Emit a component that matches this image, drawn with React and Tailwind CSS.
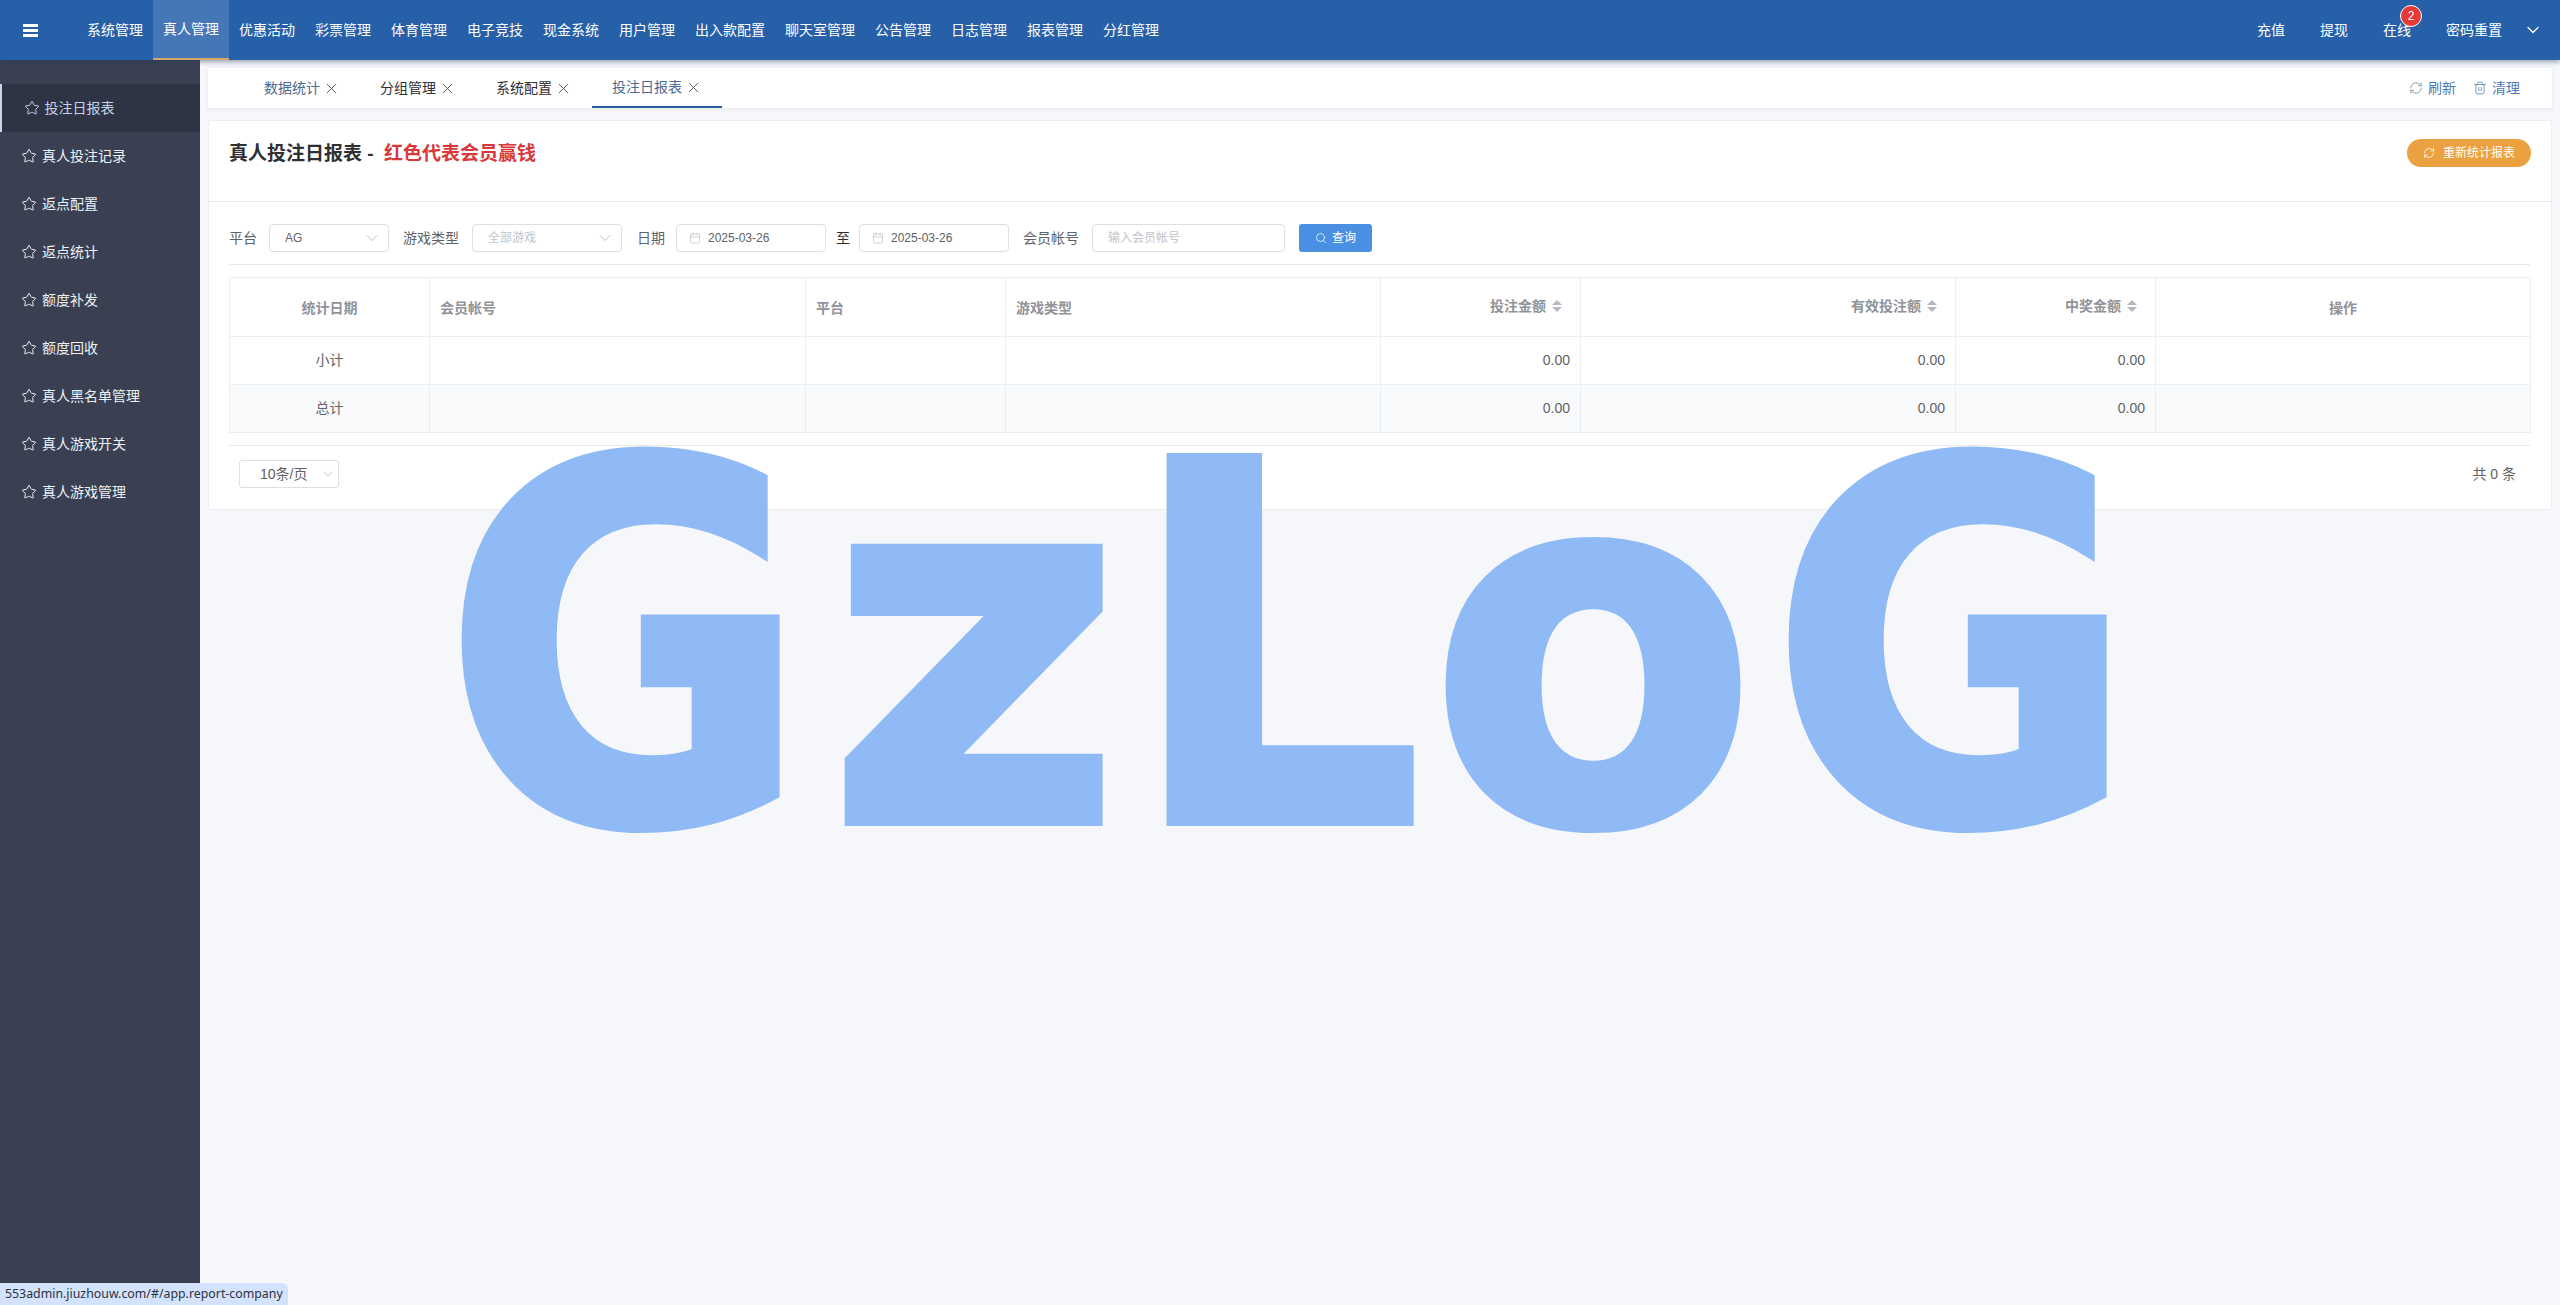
import React from 'react'
import { Star, X, RefreshCw, Trash2, Search, Calendar, ChevronDown } from 'lucide-react'

const NAV_ITEMS = ['系统管理', '真人管理', '优惠活动', '彩票管理', '体育管理', '电子竞技', '现金系统', '用户管理', '出入款配置', '聊天室管理', '公告管理', '日志管理', '报表管理', '分红管理']
const SIDE_ITEMS = ['投注日报表', '真人投注记录', '返点配置', '返点统计', '额度补发', '额度回收', '真人黑名单管理', '真人游戏开关', '真人游戏管理']
const TABS = ['数据统计', '分组管理', '系统配置', '投注日报表']

function Caret() {
  return (
    <svg width="10" height="14" viewBox="0 0 10 14" className="shrink-0 text-[#b4b8c0]">
      <path d="M5 1 10 6H0z" fill="currentColor" />
      <path d="M5 13 0 8h10z" fill="currentColor" />
    </svg>
  )
}

function Header() {
  return (
    <header className="relative z-10 h-[60px] shrink-0 flex items-center bg-[#2560a8] text-white text-sm shadow-[0_2px_5px_rgba(40,60,90,0.45)]">
      <div className="w-[77px] pl-[23px] shrink-0">
        <div className="flex flex-col gap-[2px] w-[15px]">
          <span className="h-[3px] bg-white" />
          <span className="h-[3px] bg-white" />
          <span className="h-[3px] bg-white" />
        </div>
      </div>
      <nav className="flex h-full">
        {NAV_ITEMS.map((item) => (
          <div
            key={item}
            className={item === '真人管理'
              ? 'h-full px-2.5 flex items-center bg-[#4577b6] border-b-2 border-[#d8a868]'
              : 'h-full px-2.5 flex items-center'}
          >
            {item}
          </div>
        ))}
      </nav>
      <div className="ml-auto flex items-center pr-[17px]">
        <span>充值</span>
        <span className="ml-[35px]">提现</span>
        <span className="ml-[35px] relative">
          在线
          <span className="absolute -top-[15px] -right-[11px] w-[22px] h-[22px] rounded-full bg-[#e53935] border border-white text-xs flex items-center justify-center">2</span>
        </span>
        <span className="ml-[35px]">密码重置</span>
        <ChevronDown size={20} strokeWidth={1.5} className="ml-[21px]" />
      </div>
    </header>
  )
}

function Sidebar() {
  return (
    <aside className="w-[200px] shrink-0 bg-[#3a4052] pt-6 text-sm text-[#eef0f4]">
      {SIDE_ITEMS.map((item, i) => (
        <div
          key={item}
          className={i === 0
            ? 'h-12 flex items-center gap-[5px] pl-[21.5px] bg-[#2f3444] border-l-2 border-[#c9d6ea] text-[#c3d3ea]'
            : 'h-12 flex items-center gap-[5px] pl-[21px]'}
        >
          <Star size={16} strokeWidth={1.5} className="shrink-0" />
          {item}
        </div>
      ))}
    </aside>
  )
}

function TabsBar() {
  return (
    <div className="h-10 bg-white flex items-stretch pl-9 pr-8 text-sm shadow-[0_1px_4px_rgba(0,21,41,0.08)]">
      {TABS.map((tab, i) => (
        <div
          key={tab}
          className={[
            'px-5 flex items-center',
            i === 3 ? 'border-b-2 border-[#2a5f9e] text-[#4a6a92]' : '',
            i === 0 ? 'text-[#4a6a92]' : '',
            i === 1 || i === 2 ? 'text-[#2d2f33]' : '',
          ].join(' ')}
        >
          {tab}
          <X size={17} strokeWidth={1.2} className="ml-[3px] text-[#444]" />
        </div>
      ))}
      <div className="ml-auto flex items-center text-[#4f7bb5]">
        <RefreshCw size={14} strokeWidth={1.3} className="text-[#7b8794]" />
        <span className="ml-[5px]">刷新</span>
        <Trash2 size={14} strokeWidth={1.3} className="ml-[17px]" />
        <span className="ml-[5px]">清理</span>
      </div>
    </div>
  )
}

function SelectBox({ className, text, muted }) {
  return (
    <div className={`h-7 flex items-center justify-between pl-[15px] pr-1.5 rounded border border-[#dcdfe6] bg-white text-xs ${muted ? 'text-[#c0c4cc]' : 'text-[#606266]'} ${className}`}>
      {text}
      <ChevronDown size={20} strokeWidth={0.9} className="text-[#a8abb2]" />
    </div>
  )
}

function DateBox({ className }) {
  return (
    <div className={`h-7 flex items-center pl-3 rounded border border-[#dcdfe6] bg-white text-xs text-[#606266] ${className}`}>
      <Calendar size={12} strokeWidth={1} className="text-[#a8abb2] mr-[7px]" />
      2025-03-26
    </div>
  )
}

function FilterRow() {
  return (
    <div className="flex items-center h-7 text-sm text-[#606266]">
      <span className="w-[40px]">平台</span>
      <SelectBox className="w-[120px]" text="AG" />
      <span className="ml-[14px] w-[69px]">游戏类型</span>
      <SelectBox className="w-[150px]" text="全部游戏" muted />
      <span className="ml-[15px] w-[39px]">日期</span>
      <DateBox className="w-[150px]" />
      <span className="ml-[10px] w-[23px] text-[#2d2f33]">至</span>
      <DateBox className="w-[150px]" />
      <span className="ml-[14px] w-[69px]">会员帐号</span>
      <div className="w-[193px] h-7 flex items-center pl-[15px] rounded border border-[#dcdfe6] bg-white text-xs text-[#c0c4cc]">输入会员帐号</div>
      <button className="ml-[14px] w-[73px] h-7 flex items-center justify-center gap-[5px] rounded-[3px] bg-[#4a90e2] text-white text-xs">
        <Search size={12} strokeWidth={1.5} />
        查询
      </button>
    </div>
  )
}

function HeadCell({ children, sort }) {
  if (sort) {
    return (
      <th className="border border-[#ebeef5] px-2.5 font-bold text-[#909399]">
        <div className="flex items-center justify-end gap-1.5 pr-2 -mt-[2px]">
          {children}
          <Caret />
        </div>
      </th>
    )
  }
  return <th className="border border-[#ebeef5] px-2.5 pt-[2px] text-left font-bold text-[#909399]">{children}</th>
}

function ReportTable() {
  const rows = [
    { label: '小计', bg: 'bg-white' },
    { label: '总计', bg: 'bg-[#f9fafb]' },
  ]
  return (
    <table className="w-full table-fixed border-collapse text-sm text-[#606266]">
      <colgroup>
        <col className="w-[200px]" />
        <col className="w-[376px]" />
        <col className="w-[200px]" />
        <col className="w-[375px]" />
        <col className="w-[200px]" />
        <col className="w-[375px]" />
        <col className="w-[200px]" />
        <col className="w-[375px]" />
      </colgroup>
      <thead>
        <tr className="h-[59px]">
          <th className="border border-[#ebeef5] pt-[2px] font-bold text-[#909399]">统计日期</th>
          <HeadCell>会员帐号</HeadCell>
          <HeadCell>平台</HeadCell>
          <HeadCell>游戏类型</HeadCell>
          <HeadCell sort>投注金额</HeadCell>
          <HeadCell sort>有效投注额</HeadCell>
          <HeadCell sort>中奖金额</HeadCell>
          <th className="border border-[#ebeef5] pt-[2px] font-bold text-[#909399]">操作</th>
        </tr>
      </thead>
      <tbody>
        {rows.map((row) => (
          <tr key={row.label} className={`h-12 ${row.bg}`}>
            <td className="border border-[#ebeef5] pb-[2px] text-center">{row.label}</td>
            <td className="border border-[#ebeef5]" />
            <td className="border border-[#ebeef5]" />
            <td className="border border-[#ebeef5]" />
            <td className="border border-[#ebeef5] px-2.5 pb-[2px] text-right">0.00</td>
            <td className="border border-[#ebeef5] px-2.5 pb-[2px] text-right">0.00</td>
            <td className="border border-[#ebeef5] px-2.5 pb-[2px] text-right">0.00</td>
            <td className="border border-[#ebeef5]" />
          </tr>
        ))}
      </tbody>
    </table>
  )
}

function ReportCard() {
  return (
    <section className="mt-3 h-[390px] bg-white border border-[#ebeef5] rounded-[3px]">
      <div className="h-[81px] flex items-start justify-between pl-5 pr-[20px] pt-[18px] border-b border-[#e6e9ee]">
        <h1 className="mt-px text-[19px] leading-7 font-bold text-[#2d2f33]">
          真人投注日报表 - <span className="ml-[5px] text-[#d9393b]">红色代表会员赢钱</span>
        </h1>
        <button className="h-7 px-4 flex items-center gap-2 rounded-full bg-[#eba13f] text-white text-xs">
          <RefreshCw size={12} strokeWidth={1.5} />
          重新统计报表
        </button>
      </div>
      <div className="pl-5 pr-[21px] pt-[22px]">
        <div className="pb-3 border-b border-[#e6e9ee]">
          <FilterRow />
        </div>
        <div className="pt-3 pb-3 border-b border-[#e6e9ee]">
          <ReportTable />
        </div>
        <div className="pt-[14px] flex items-center justify-between text-sm text-[#606266]">
          <div className="ml-2.5 w-[100px] h-7 flex items-center justify-between pl-5 pr-0.5 rounded-[3px] border border-[#dcdfe6]">
            10条/页
            <ChevronDown size={16} strokeWidth={1} className="text-[#a8abb2]" />
          </div>
          <span className="mr-3.5">共 0 条</span>
        </div>
      </div>
    </section>
  )
}

export default function App() {
  return (
    <div
      className="relative h-[1305px] flex flex-col overflow-hidden bg-[#f5f7fb]"
      style={{ fontFamily: '"Liberation Sans", "Noto Sans CJK SC", sans-serif' }}
    >
      <Header />
      <div className="flex-1 flex min-h-0">
        <Sidebar />
        <main className="flex-1 min-w-0 pl-2 pr-2 pt-2">
          <TabsBar />
          <ReportCard />
        </main>
      </div>
      {/* watermark sits over the page, letters squeezed one by one to fit */}
      <div
        className="absolute left-[444px] top-[350px] pointer-events-none text-[#90baf5] [-webkit-text-stroke:10px_#90baf5] text-[498px] leading-[1.2] font-bold whitespace-nowrap"
        style={{ fontFamily: '"DejaVu Sans", sans-serif' }}
      >
        <span className="inline-block w-[383px] origin-left scale-x-[0.89]">G</span>
        <span className="inline-block w-[302px] origin-left scale-x-[1.017]">z</span>
        <span className="inline-block w-[301px] origin-left scale-x-[0.922]">L</span>
        <span className="inline-block w-[341px] origin-left scale-x-[0.953]">o</span>
        <span className="inline-block origin-left scale-x-[0.89]">G</span>
      </div>
      <div
        className="absolute left-0 bottom-0 w-[288px] h-[22px] pl-[5px] flex items-center rounded-tr-md bg-[#d3e3fd] text-[12.35px] text-[#2d3340] whitespace-nowrap"
        style={{ fontFamily: '"Noto Sans", sans-serif' }}
      >
        553admin.jiuzhouw.com/#/app.report-company
      </div>
    </div>
  )
}
